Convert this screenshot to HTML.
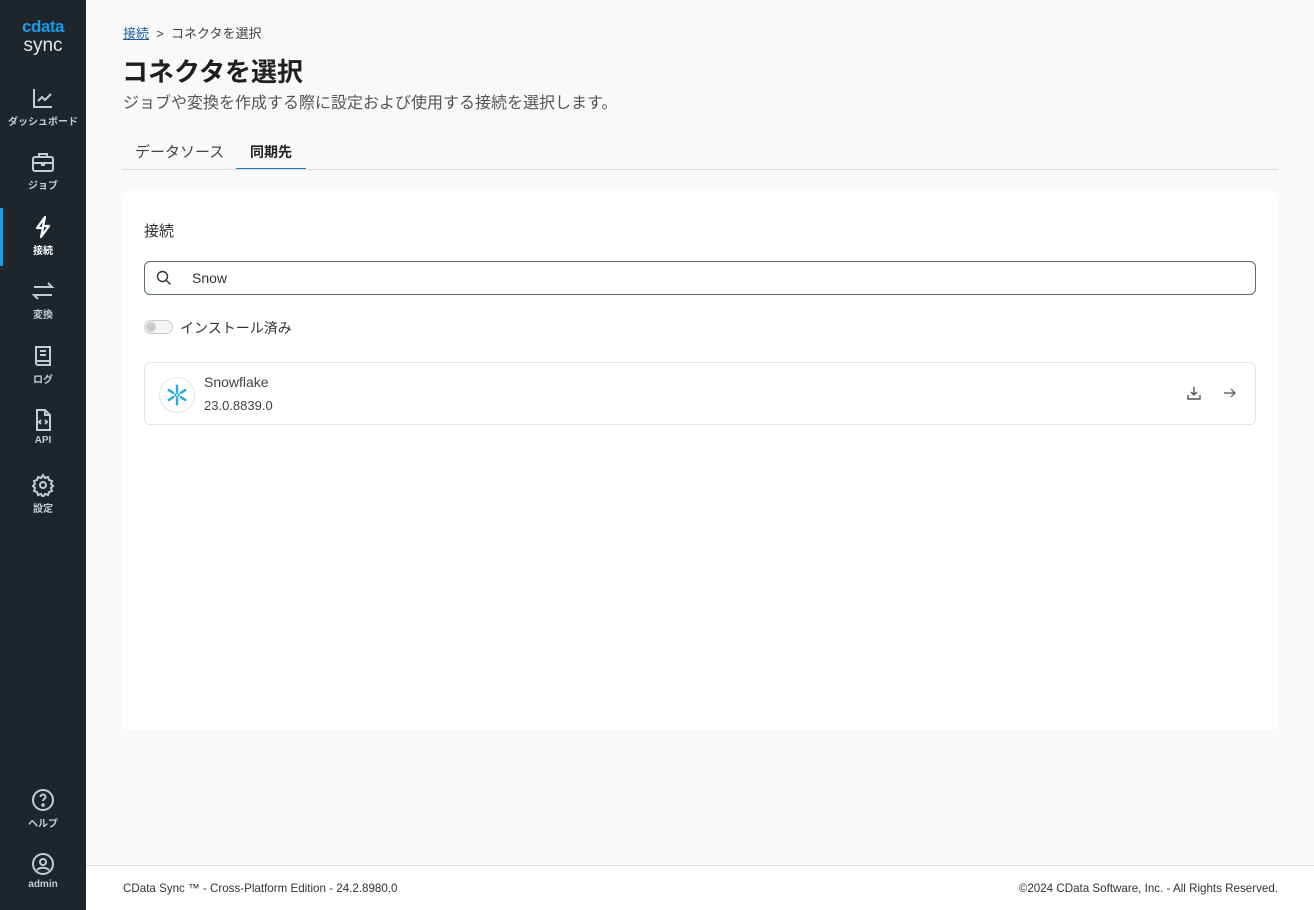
<!DOCTYPE html>
<html><head><meta charset="utf-8"><style>
*{box-sizing:border-box;margin:0;padding:0}
body{width:1314px;height:910px;overflow:hidden;background:#f9f9f9;font-family:"Liberation Sans","Noto Sans CJK JP",sans-serif;color:#212529;position:relative}
.sb{position:absolute;left:0;top:0;width:86px;height:910px;background:#1f262b}
.logo{position:absolute;top:18px;left:0;width:86px;text-align:center}
.logo .c{color:#1a9be6;font-weight:bold;font-size:17px;letter-spacing:-0.5px;line-height:18px}
.logo .s{color:#e6e6e6;font-size:19px;line-height:20px}
.it{position:absolute;left:0;width:86px;text-align:center;color:#c3ccd3;font-size:10px;font-weight:bold}
.it svg{display:block;margin:0 auto 3px}
.act{color:#fff}
.bar{position:absolute;left:0;top:208px;width:3px;height:58px;background:#1a9be6}
.main{position:absolute;left:86px;top:0;right:0;bottom:0}
.bc{position:absolute;left:37px;top:23px;font-size:13px;color:#444}
.bc u{color:#1a5f9a}
h1{position:absolute;left:36px;top:52px;font-size:26px;font-weight:bold;color:#1f1f1f}
.sub{position:absolute;left:37px;top:89px;font-size:16px;color:#555}
.tabs{position:absolute;left:36px;top:133px;width:1156px;height:37px;border-bottom:1px solid #ddd}
.tab{position:absolute;top:8px;font-size:15px;color:#444}
.card{position:absolute;left:36px;top:191px;width:1156px;height:539px;background:#fff;border-radius:8px}
.srch{position:absolute;left:22px;top:70px;width:1112px;height:34px;border:1px solid #5b6a75;border-radius:6px}
.row{position:absolute;left:22px;top:171px;width:1112px;height:63px;border:1px solid #e3e6e8;border-radius:6px}
.foot{position:absolute;left:86px;top:865px;right:0;height:45px;border-top:1px solid #e3e3e3;background:#fff;font-size:11.6px;color:#333}
</style></head><body>
<div class="sb">
 <div class="logo"><div class="c">cdata</div><div class="s">sync</div></div>
 <div class="it" style="top:86px"><svg width="24" height="24" viewBox="0 0 24 24" fill="none" stroke="#c3ccd3" stroke-width="2"><path d="M3 3v18h18M7 15l4-4 3 3 6-6"/></svg>ダッシュボード</div>
 <div class="it" style="top:150px"><svg width="24" height="24" viewBox="0 0 24 24" fill="none" stroke="#c3ccd3" stroke-width="2"><rect x="2" y="7" width="20" height="14" rx="2"/><path d="M8 7V4h8v3M2 13h20M11 13v2h2v-2"/></svg>ジョブ</div>
 <div class="bar"></div>
 <div class="it act" style="top:215px"><svg width="24" height="24" viewBox="0 0 24 24" fill="none" stroke="#fff" stroke-width="2.2" stroke-linejoin="round"><path d="M14 2L6 13h6l-2 9 8-11h-6z"/></svg>接続</div>
 <div class="it" style="top:279px"><svg width="24" height="24" viewBox="0 0 24 24" fill="none" stroke="#c3ccd3" stroke-width="2"><path d="M3 8h18l-4-4M21 16H3l4 4"/></svg>変換</div>
 <div class="it" style="top:344px"><svg width="24" height="24" viewBox="0 0 24 24" fill="none" stroke="#c3ccd3" stroke-width="2"><path d="M5 3h14v18H7a2 2 0 01-2-2zM5 17h14M9 7h6M9 11h6"/></svg>ログ</div>
 <div class="it" style="top:408px"><svg width="24" height="24" viewBox="0 0 24 24" fill="none" stroke="#c3ccd3" stroke-width="2"><path d="M6 2h8l5 5v15H6zM14 2v5h5M10 12l-2 2 2 2M14 12l2 2-2 2"/></svg>API</div>
 <div class="it" style="top:473px"><svg width="24" height="24" viewBox="0 0 24 24" fill="none" stroke="#c3ccd3" stroke-width="2"><circle cx="12" cy="12" r="3"/><path d="M12 2l2 3 3-1 1 3 3 1-1 3 2 2-2 2 1 3-3 1-1 3-3-1-2 3-2-3-3 1-1-3-3-1 1-3-2-2 2-2-1-3 3-1 1-3 3 1z"/></svg>設定</div>
 <div class="it" style="top:788px"><svg width="24" height="24" viewBox="0 0 24 24" fill="none" stroke="#c3ccd3" stroke-width="2"><circle cx="12" cy="12" r="10"/><path d="M9.5 9a2.5 2.5 0 115 0c0 2-2.5 2-2.5 4"/><circle cx="12" cy="17" r=".8" fill="#c3ccd3"/></svg>ヘルプ</div>
 <div class="it" style="top:852px"><svg width="24" height="24" viewBox="0 0 24 24" fill="none" stroke="#c3ccd3" stroke-width="2"><circle cx="12" cy="12" r="10"/><circle cx="12" cy="10" r="3"/><path d="M6 18c3-3 9-3 12 0"/></svg>admin</div>
</div>
<div class="main">
 <div class="bc"><u>接続</u> &nbsp;&gt;&nbsp; コネクタを選択</div>
 <h1>コネクタを選択</h1>
 <div class="sub">ジョブや変換を作成する際に設定および使用する接続を選択します。</div>
 <div class="tabs">
  <div class="tab" style="left:13px">データソース</div>
  <div class="tab" style="left:128px;font-weight:bold;color:#222;font-size:14px;top:9px">同期先</div>
  <div style="position:absolute;left:114px;width:70px;top:35px;height:1px;background:#1a7fc1"></div>
 </div>
 <div class="card">
  <div style="position:absolute;left:22px;top:29px;font-size:15px;color:#333">接続</div>
  <div class="srch">
   <svg style="position:absolute;left:11px;top:8px" width="16" height="16" viewBox="0 0 16 16" fill="none" stroke="#333" stroke-width="1.4"><circle cx="6.5" cy="6.5" r="5"/><path d="M10.5 10.5l4 4"/></svg>
   <div style="position:absolute;left:47px;top:8px;font-size:14px;color:#333">Snow</div>
  </div>
  <div style="position:absolute;left:22px;top:129px;width:29px;height:14px;border:1px solid #ccc;border-radius:7px;background:#f5f5f5"><div style="position:absolute;left:1px;top:1px;width:10px;height:10px;border-radius:5px;background:#ccc"></div></div>
  <div style="position:absolute;left:58px;top:127px;font-size:14px;color:#333">インストール済み</div>
  <div class="row">
   <div style="position:absolute;left:14px;top:14px;width:36px;height:36px;border:1px solid #e5e5e5;border-radius:18px">
    <svg style="position:absolute;left:6px;top:6px" width="22" height="22" viewBox="0 0 20 20" fill="none" stroke="#29a8e8" stroke-width="2.2" stroke-linecap="round"><path d="M10 1.5v5M10 13.5v5M2.5 5.5l4 2.5M13.5 12l4 2.5M2.5 14.5l4-2.5M13.5 8l4-2.5"/><path d="M10 8l2 2-2 2-2-2z" stroke-width="1.3"/></svg>
   </div>
   <div style="position:absolute;left:59px;top:11px;font-size:14px;color:#444">Snowflake</div>
   <div style="position:absolute;left:59px;top:35px;font-size:13px;color:#444">23.0.8839.0</div>
   <svg style="position:absolute;left:1041px;top:22px" width="16" height="16" viewBox="0 0 16 16" fill="none" stroke="#555" stroke-width="1.4"><path d="M8 2v8M5 7l3 3 3-3M2 10v4h12v-4"/></svg>
   <svg style="position:absolute;left:1077px;top:22px" width="16" height="16" viewBox="0 0 16 16" fill="none" stroke="#555" stroke-width="1.2"><path d="M2 8h11M9 4l4 4-4 4"/></svg>
  </div>
 </div>
</div>
<div class="foot">
 <div style="position:absolute;left:37px;top:16px">CData Sync ™ - Cross-Platform Edition - 24.2.8980.0</div>
 <div style="position:absolute;right:36px;top:16px">©2024 CData Software, Inc. - All Rights Reserved.</div>
</div>
</body></html>
